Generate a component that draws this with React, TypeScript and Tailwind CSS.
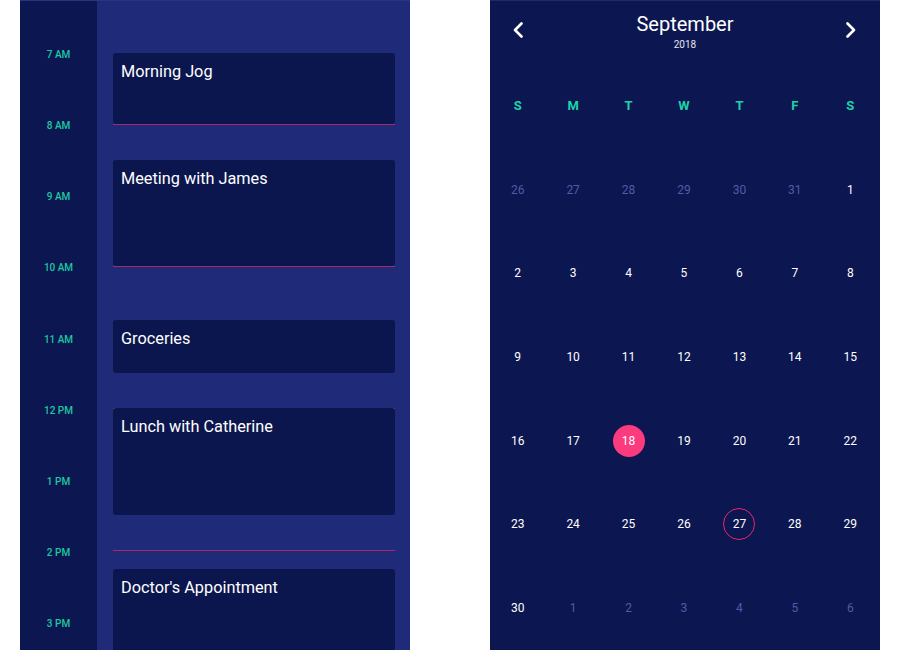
import React from "react";

const hours = ["7 AM", "8 AM", "9 AM", "10 AM", "11 AM", "12 PM", "1 PM", "2 PM", "3 PM"];

function PinkLine() {
  return <div className="h-px w-full shrink-0 bg-[#a8286f]" />;
}

function Card({ title, h, extra = "" }: { title: string; h: string; extra?: string }) {
  return (
    <div className={`${h} ${extra} w-full shrink-0 rounded-[3px] bg-[#0c164e] px-2 pt-[7px]`}>
      <div className="text-[16.3px] leading-6 text-white">{title}</div>
    </div>
  );
}

function Gap({ h }: { h: string }) {
  return <div className={`${h} shrink-0`} />;
}

const weekdays = ["S", "M", "T", "W", "T", "F", "S"];

type Day = { n: number; muted?: boolean; selected?: boolean; ring?: boolean };

function buildDays(): Day[] {
  const d: Day[] = [];
  for (let i = 26; i <= 31; i++) d.push({ n: i, muted: true });
  for (let i = 1; i <= 30; i++) d.push({ n: i, selected: i === 18, ring: i === 27 });
  for (let i = 1; i <= 6; i++) d.push({ n: i, muted: true });
  return d;
}

export default function App() {
  const days = buildDays();
  return (
    <div
      className="flex h-[650px] w-[900px] bg-white"
      style={{ fontFamily: "Roboto, 'Noto Sans', sans-serif" }}
    >
      {/* Left day view */}
      <div className="ml-[20px] flex h-[650px] w-[390px] overflow-hidden bg-[#1f2a78] border-t border-[#2a3580]">
        <div className="flex w-[77px] shrink-0 flex-col bg-[#0c1650] pt-[17.8px]">
          {hours.map((h) => (
            <div key={h} className="flex h-[71.2px] shrink-0 items-center justify-center text-[10px] font-medium text-[#1cc9a0]">
              {h}
            </div>
          ))}
        </div>
        <div className="flex flex-1 flex-col overflow-hidden pl-4 pr-[15px] pt-[52px]">
          <Card title="Morning Jog" h="h-[71px]" />
          <PinkLine />
          <Gap h="h-[35px]" />
          <Card title="Meeting with James" h="h-[106px]" />
          <PinkLine />
          <Gap h="h-[53px]" />
          <Card title="Groceries" h="h-[53px]" />
          <Gap h="h-[35px]" />
          <PinkLine />
          <Card title="Lunch with Catherine" h="h-[107px]" extra="-mt-px" />
          <Gap h="h-[35px]" />
          <PinkLine />
          <Gap h="h-[18px]" />
          <Card title="Doctor's Appointment" h="h-[120px]" />
        </div>
      </div>

      {/* Right month view */}
      <div className="ml-[80px] flex h-[650px] w-[390px] flex-col bg-[#0c1650] border-t border-[#1d2a6c]">
        <div className="relative flex h-[63px] shrink-0 flex-col items-center">
          <div className="mt-[11px] text-[20px] leading-6 text-white">September</div>
          <div className="mt-[3px] text-[10px] leading-3 text-white/90">2018</div>
          <svg className="absolute left-[22px] top-[21px]" width="12" height="16" viewBox="0 0 12 16" fill="none">
            <path d="M9.5 1.5 3 8l6.5 6.5" stroke="white" strokeWidth="2.6" strokeLinecap="round" strokeLinejoin="round" />
          </svg>
          <svg className="absolute left-[355px] top-[21px]" width="12" height="16" viewBox="0 0 12 16" fill="none">
            <path d="M2.5 1.5 9 8l-6.5 6.5" stroke="white" strokeWidth="2.6" strokeLinecap="round" strokeLinejoin="round" />
          </svg>
        </div>
        <div className="grid w-[388px] flex-1 grid-cols-7 grid-rows-7">
          {weekdays.map((w, i) => (
            <div key={i} className="flex items-center justify-center text-[13px] font-bold text-[#1dd3a7]">
              {w}
            </div>
          ))}
          {days.map((d, i) => (
            <div key={i} className="flex items-center justify-center">
              <div
                className={
                  d.selected
                    ? "flex h-8 w-8 items-center justify-center rounded-full bg-[#fb3b7d] text-[12px] text-white"
                    : d.ring
                    ? "flex h-8 w-8 items-center justify-center rounded-full border border-[#e2276d] text-[12px] text-white"
                    : d.muted
                    ? "text-[12px] text-[#4f5ca9]"
                    : "text-[12px] text-white"
                }
              >
                {d.n}
              </div>
            </div>
          ))}
        </div>
      </div>
    </div>
  );
}
